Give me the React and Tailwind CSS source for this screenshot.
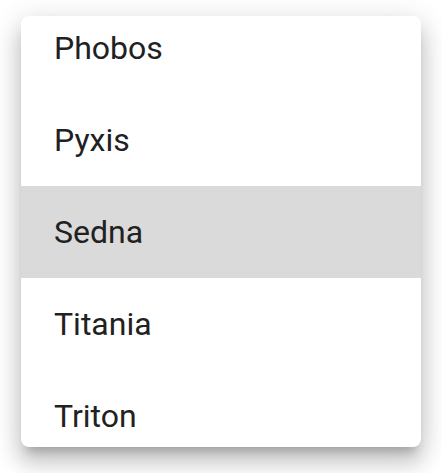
import React from 'react'

const moons = ['Phobos', 'Pyxis', 'Sedna', 'Titania', 'Triton']

const App = () => {
  return (
    <div className="min-h-screen w-[442px] h-[473px] bg-white pt-[16px] pl-[21px]" style={{ fontFamily: 'Roboto, "Liberation Sans", sans-serif' }}>
      <div className="w-[400px] h-[431px] bg-white rounded-[8px] overflow-hidden shadow-[0px_10px_10px_-6px_rgba(0,0,0,0.2),0px_16px_20px_2px_rgba(0,0,0,0.14),0px_6px_28px_4px_rgba(0,0,0,0.12)]">
        <ul className="-mt-[14px]">
          {moons.map((name) => (
            <li
              key={name}
              className={
                name === 'Sedna'
                  ? 'h-[92px] flex items-center pl-[33px] text-[32px] text-[#212121] bg-[#dadada]'
                  : 'h-[92px] flex items-center pl-[33px] text-[32px] text-[#212121]'
              }
            >
              {name}
            </li>
          ))}
        </ul>
      </div>
    </div>
  )
}

export default App
